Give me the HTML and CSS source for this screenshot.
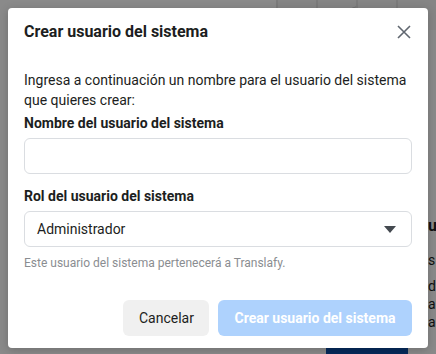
FILE: index.html
```html
<!DOCTYPE html>
<html lang="es">
<head>
    <meta charset="UTF-8">
    <meta name="viewport" content="width=device-width, initial-scale=1.0">
    <title>Crear usuario del sistema</title>
    <link rel="stylesheet" href="styles.css">
</head>
<body>
    <!-- pagina de fondo, tapada por el overlay -->
    <div class="page">
        <div class="page-top">
            <div class="cell"></div>
            <div class="cell cell-mark"></div>
            <div class="cell"></div>
            <div class="cell"></div>
        </div>
        <div class="page-body">
            <div class="page-left"></div>
            <div class="page-right">
                <h3>u</h3>
                <p>s</p>
                <p>d</p>
                <p>a</p>
                <p>a</p>
            </div>
        </div>
        <div class="page-bottom">
            <span class="page-btn"></span>
        </div>
    </div>

    <div class="overlay">
        <div class="modal">
            <header class="modal-header">
                <h2>Crear usuario del sistema</h2>
                <span class="close">
                    <svg width="14" height="14" viewBox="0 0 14 14">
                        <path d="M1 1 L13 13 M13 1 L1 13" stroke="#606770" stroke-width="1.6" fill="none"/>
                    </svg>
                </span>
            </header>

            <div class="modal-body">
                <p class="intro">Ingresa a continuación un nombre para el usuario del sistema que quieres crear:</p>

                <label class="field-label">Nombre del usuario del sistema</label>
                <div class="input"></div>

                <label class="field-label field-gap">Rol del usuario del sistema</label>
                <div class="input select">
                    <span>Administrador</span>
                    <svg width="12" height="7" viewBox="0 0 12 7">
                        <path d="M0 0 H12 L6 7 Z" fill="#444950"/>
                    </svg>
                </div>
                <p class="help">Este usuario del sistema pertenecerá a Translafy.</p>
            </div>

            <footer class="modal-footer">
                <button class="btn btn-cancel">Cancelar</button>
                <button class="btn btn-primary">Crear usuario del sistema</button>
            </footer>
        </div>
    </div>
</body>
</html>
```

FILE: styles.css
```css
body {
    margin: 0;
    padding: 0;
    font-family: Roboto, "Liberation Sans", Arial, sans-serif;
    color: #1c1e21;
    background: #fff;
    width: 436px;
    height: 354px;
    overflow: hidden;
    position: relative;
}

/* fondo */
.page {
    height: 354px;
    display: flex;
    flex-direction: column;
}
.page-top {
    display: flex;
    justify-content: flex-end;
    height: 30px;
}
.page-top .cell {
    width: 38px;
    border-left: 2px solid #e4e4e4;
    background: #f5f5f5;
}
.page-top .cell-mark {
    background: linear-gradient(160deg, #f5f5f5 45%, #ccc 47%, #f5f5f5 50%);
}
.page-body {
    flex: 1;
    display: flex;
}
.page-left {
    width: 428px;
    flex-shrink: 0;
}
.page-right {
    padding-top: 185px;
    font-size: 14px;
    color: #1c1e21;
}
.page-right h3 {
    margin: 0 0 14px;
    font-size: 16px;
    line-height: 22px;
}
.page-right p {
    margin: 0;
    line-height: 18px;
}
.page-right p:first-of-type {
    margin-bottom: 8px;
}
.page-bottom {
    display: flex;
    justify-content: flex-end;
    padding-right: 28px;
}
.page-btn {
    width: 82px;
    height: 8px;
    background: #0b4fa8;
}

/* modal */
.overlay {
    position: absolute;
    inset: 0;
    background: rgba(0, 0, 0, 0.46);
    padding: 8px;
}
.modal {
    width: 420px;
    height: 340px;
    background: #fff;
    border-radius: 4px;
    box-shadow: 0 2px 10px rgba(0, 0, 0, 0.2);
    display: flex;
    flex-direction: column;
}
.modal-header {
    height: 47px;
    display: flex;
    align-items: center;
    justify-content: space-between;
    padding: 0 17px 0 16px;
}
.modal-header h2 {
    margin: 0;
    font-size: 16px;
    font-weight: 700;
    color: #1c1e21;
}
.close {
    display: flex;
    width: 14px;
    height: 14px;
}
.modal-body {
    padding: 15px 16px 0;
    flex: 1;
}
.intro {
    margin: 0;
    font-size: 14px;
    line-height: 20px;
    color: #1c1e21;
}
.field-label {
    display: block;
    margin-top: 4px;
    font-size: 14px;
    line-height: 18px;
    font-weight: 700;
    color: #1c1e21;
}
.field-gap {
    margin-top: 13px;
}
.input {
    margin-top: 6px;
    height: 34px;
    border: 1px solid #dadde1;
    border-radius: 6px;
    box-sizing: content-box;
}
.select {
    display: flex;
    align-items: center;
    justify-content: space-between;
    padding: 0 15px 0 12px;
    font-size: 14px;
    color: #1c1e21;
}
.help {
    margin: 8px 0 0;
    font-size: 12px;
    line-height: 16px;
    color: #8a8d91;
}
.modal-footer {
    display: flex;
    justify-content: flex-end;
    gap: 9px;
    padding: 0 16px 12px;
}
.btn {
    height: 36px;
    border: none;
    border-radius: 6px;
    font-family: Roboto, "Liberation Sans", Arial, sans-serif;
    font-size: 14px;
    padding: 0 16px;
    white-space: nowrap;
}
.btn-cancel {
    background: #f0f0f0;
    color: #1c1e21;
    width: 86px;
}
.btn-primary {
    background: #aed2fd;
    color: #fff;
    font-weight: 700;
    width: 194px;
}
```
